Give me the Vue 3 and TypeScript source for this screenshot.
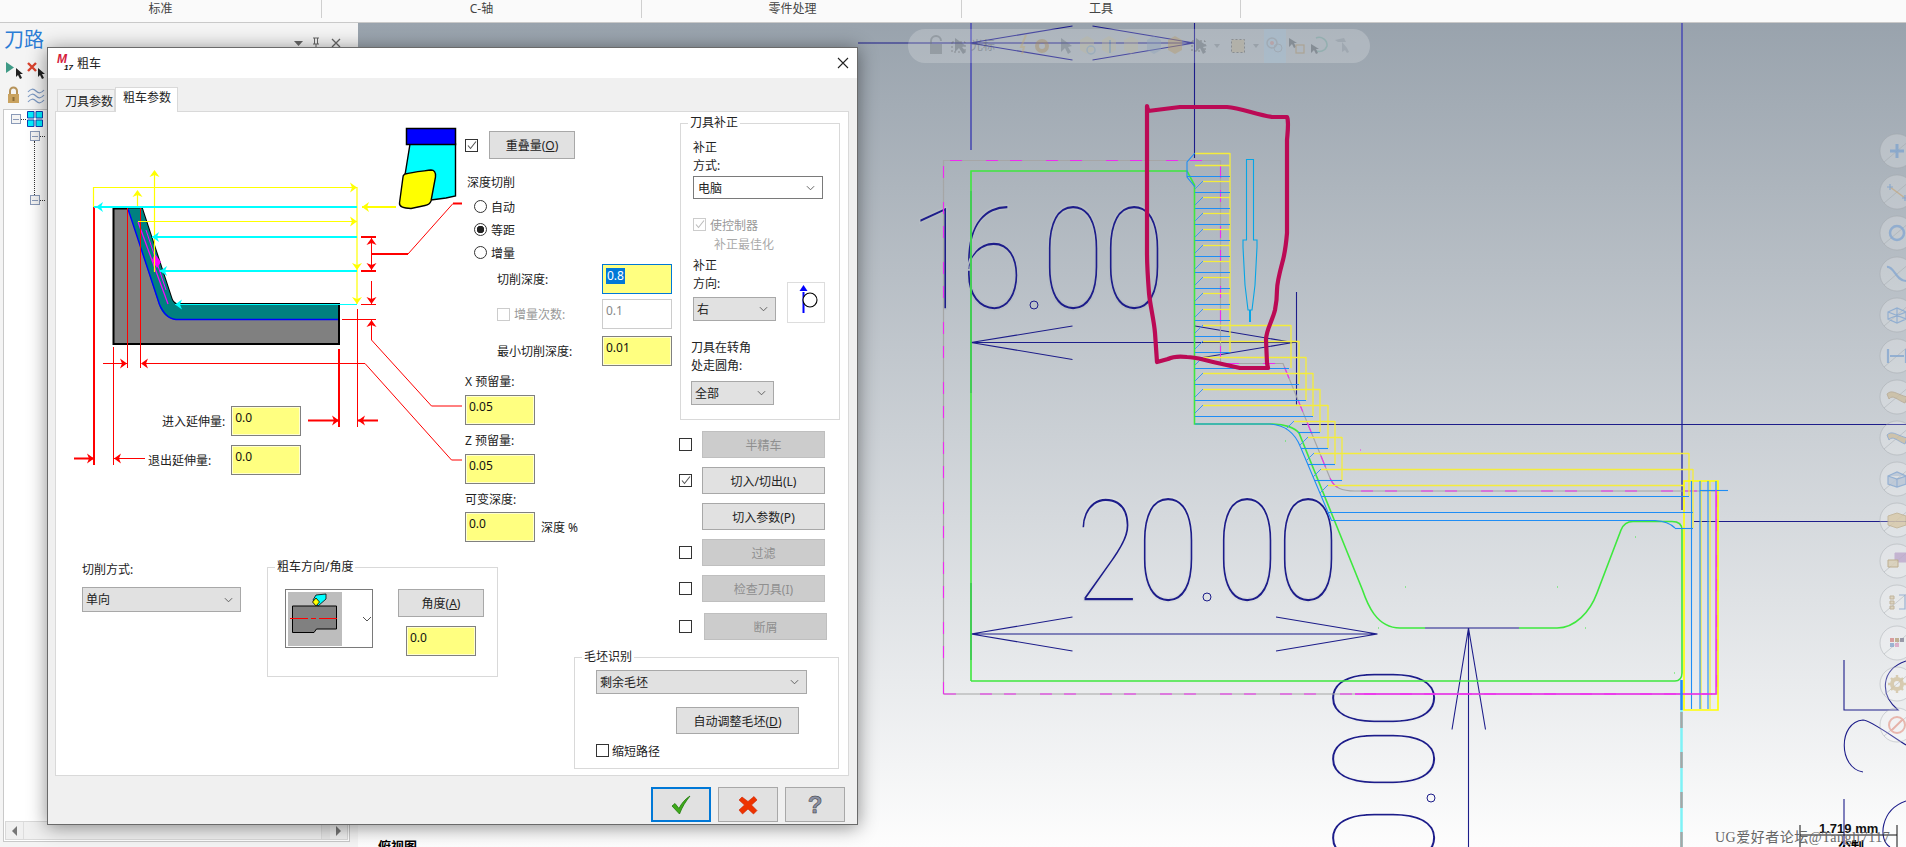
<script setup lang="ts">
const tabs = ['标准', 'C-轴', '零件处理', '工具']

// 右侧按钮
const sideButtons = [
  { label: '半精车', on: false, off: true, box: true },
  { label: '切入/切出(L)', on: true, off: false, box: true },
  { label: '切入参数(P)', on: false, off: false, box: false },
  { label: '过滤', on: false, off: true, box: true },
  { label: '检查刀具(I)', on: false, off: true, box: true },
  { label: '断屑', on: false, off: true, box: true, last: true }
]

// 粗加工路径数据
const bluePasses: number[][] = []
for (let y = 192; y <= 352; y += 16) bluePasses.push([1195, y, 1230])
bluePasses.push(
  [1187, 176, 1230], [1195, 368, 1289], [1195, 384, 1299], [1195, 400, 1306], [1195, 416, 1313],
  [1298, 432, 1320], [1301, 448, 1328], [1308, 464, 1335], [1314, 480, 1342], [1321, 496, 1689],
  [1328, 512, 1693], [1675, 528, 1693], [1700, 490, 1728]
)
const yellowPasses: number[][] = []
for (let y = 181; y <= 309; y += 16) yellowPasses.push([1203, y, 1230])
yellowPasses.push(
  [1195, 153, 1230], [1195, 165, 1230], [1203, 325, 1291], [1203, 341, 1299], [1203, 357, 1306],
  [1203, 373, 1313], [1203, 389, 1320], [1203, 405, 1328], [1294, 421, 1335], [1308, 437, 1342],
  [1314, 453, 1689], [1321, 469, 1693], [1328, 485, 1684]
)
const yellowDrops = [
  [1230, 153, 352], [1291, 325, 368], [1299, 341, 384], [1306, 357, 400], [1313, 373, 416],
  [1320, 389, 432], [1328, 405, 448], [1335, 421, 464], [1342, 437, 480], [1689, 453, 496],
  [1693, 469, 528], [1701, 481, 709], [1710, 481, 709]
]
const ticks = yellowPasses.filter(p => p[1] > 170)

// 背景色, 用来把大数字的笔画压细
const bgAt = (y: number) => {
  const t = (y - 23) / 824
  const mix = (a: number, b: number) => Math.round(a + (b - a) * t)
  return `rgb(${mix(153, 253)},${mix(163, 253)},${mix(173, 253)})`
}
const bigDigits = [
  { t: '1', x: 941, y: 258, r: 0 },
  { t: '6', x: 992, y: 258, r: 0 },
  { t: '0', x: 1073, y: 258, r: 0 },
  { t: '0', x: 1134, y: 258, r: 0 },
  { t: '2', x: 1107, y: 550, r: 0 },
  { t: '0', x: 1168, y: 550, r: 0 },
  { t: '0', x: 1247, y: 550, r: 0 },
  { t: '0', x: 1308, y: 550, r: 0 },
  { t: '0', x: 1384, y: 698, r: -90 },
  { t: '0', x: 1384, y: 759, r: -90 },
  { t: '0', x: 1384, y: 838, r: -90 }
].map(d => ({ ...d, edge: bgAt(d.y) }))

const railY = Array.from({ length: 15 }, (_, i) => 151 + i * 41)
const railIcons = [
  [{ d: 'M-7 0H7M0-7V7', s: '#7fa2cc', w: 3, f: 'none' }],
  [{ d: 'M-7-5L8 6', s: '#c4ab86', w: 1.5, f: 'none' }, { d: 'M-10-5H-4M-7-8V-2M5 6H11M8 3V9', s: '#7fa2cc', w: 1.2, f: 'none' }],
  [{ d: 'M-7 0a7 7 0 1 0 14 0a7 7 0 1 0-14 0', s: '#84a6d0', w: 2.5, f: 'none' }],
  [{ d: 'M-10-7C-3-8-1 7 9 7', s: '#84a6d0', w: 2.2, f: 'none' }],
  [{ d: 'M-9-3L0-7L9-3V4L0 8L-9 4ZM-9-3L9 4M9-3L-9 4M0-7V8', s: '#84a6d0', w: 1.2, f: 'none' }],
  [{ d: 'M-9-7V7M9-7V7M-7 0H7', s: '#84a6d0', w: 2.2, f: 'none' }],
  [{ d: 'M-10-3C-5-8-1-3 10 0L8 6C0 3-4-3-8 2Z', s: '#b7a88f', w: 1, f: '#cbbd9f' }],
  [{ d: 'M-10-3C-5-8-1-3 10 0L8 6C0 3-4-3-8 2Z', s: '#8aa6cb', w: 1, f: '#cbbd9f' }],
  [{ d: 'M-9-3L0-7L9-3V5L0 8L-9 5ZM-9-3L0 0L9-3M0 0V8', s: '#84a6d0', w: 1.2, f: '#b9c6d6' }],
  [{ d: 'M-9-4L0-7L9-4V5L0 8L-9 5Z', s: '#c0b08f', w: 1, f: '#d8c9a8' }],
  [{ d: 'M-2-8H11V1H-2Z', s: '#bda9cc', w: 1, f: '#bda9cc' }, { d: 'M-9-1H1V6H-9Z', s: '#b5a27d', w: 1, f: '#d9ceb5' }],
  [{ d: 'M-7-6H-3V-3H-7ZM-7-1H-3V2H-7ZM-7 4H-3V7H-7Z', s: '#b9a88a', w: 1, f: '#d9ceb5' }, { d: 'M2-7H8V7H2', s: '#8aa6cb', w: 1.2, f: 'none' }],
  [{ d: 'M-7-5H-3V-1H-7Z', s: '#d38a8a', w: 0, f: '#d38a8a' }, { d: 'M-2-5H2V-1H-2Z', s: '#9ab', w: 0, f: '#b5a27d' }, { d: 'M3-5H7V-1H3Z', s: '#9ab', w: 0, f: '#889' }, { d: 'M-7 0H-3V4H-7Z', s: '#9ab', w: 0, f: '#8aa6cb' }, { d: 'M-2 0H2V4H-2Z', s: '#9ab', w: 0, f: '#d9a0c0' }],
  [{ d: 'M-5 0a5 5 0 1 0 10 0a5 5 0 1 0-10 0', s: '#d2c3a2', w: 4, f: 'none' }, { d: 'M0-9V-6M0 6V9M-9 0H-6M6 0H9M-6-6L-4-4M6-6L4-4M-6 6L-4 4M6 6L4 4', s: '#d2c3a2', w: 2.4, f: 'none' }],
  [{ d: 'M-8 0a8 8 0 1 0 16 0a8 8 0 1 0-16 0M-6 6L6-6', s: '#e6a79c', w: 2, f: 'none' }]
]

// 箭头: l r u d
const head = (x: number, y: number, dir: string, len = 7, half = 5) => {
  if (dir === 'l') return `${x},${y} ${x + len},${y - half} ${x + len - 2},${y} ${x + len},${y + half}`
  if (dir === 'r') return `${x},${y} ${x - len},${y - half} ${x - len + 2},${y} ${x - len},${y + half}`
  if (dir === 'u') return `${x},${y} ${x - half},${y + len} ${x},${y + len - 2} ${x + half},${y + len}`
  return `${x},${y} ${x - half},${y - len} ${x},${y - len + 2} ${x + half},${y - len}`
}
const redHeads = [
  head(127, 363.5, 'r'), head(141, 363.5, 'l'), head(339, 420.5, 'r'), head(358, 420.5, 'l'),
  head(94, 458.5, 'r'), head(114, 458.5, 'l'), head(371.5, 238, 'u'), head(371.5, 270, 'd'),
  head(371.5, 304, 'd'), head(371.5, 320, 'u')
]
const yellowHeads = [
  head(357, 187.5, 'r'), head(357, 221.5, 'r'), head(357, 270, 'd'), head(357, 304, 'd'),
  head(154.5, 170, 'u'), head(137.5, 190, 'u'), head(362, 207, 'l')
]
const cyanHeads = [
  head(96, 207, 'l'), head(152, 237, 'l'), head(160, 271, 'l'), head(175, 304.5, 'l')
]
</script>

<template>
  <div class="app">
    <header class="topbar">
      <div v-for="t in tabs" :key="t" class="topcell">{{ t }}</div>
    </header>

    <main class="work">
      <aside class="side">
        <div class="side-head">
          <span class="side-title">刀路</span>
          <svg class="side-pins" width="56" height="14" viewBox="0 0 56 14">
            <path d="M0 5H9L4.500 10Z" fill="#666" />
            <path d="M19 2H25M20.500 2V8M23.500 2V8M19 8H25M22 8V13" fill="none" stroke="#666" />
            <path d="M38 3L46 11M46 3L38 11" fill="none" stroke="#666" stroke-width="1.300" />
          </svg>
        </div>
        <div class="side-tool">
          <svg width="46" height="18" viewBox="0 0 46 18">
            <path d="M1 1V12L9 6.500Z" fill="#3f9a86" />
            <path d="M11 7V16L13 14L15 18L17 17L15 13H18Z" fill="#222" />
            <path d="M23 2L31 10M31 2L23 10" stroke="#d9412c" stroke-width="2.400" />
            <path d="M33 7V16L35 14L37 18L39 17L37 13H40Z" fill="#222" />
          </svg>
        </div>
        <div class="side-tool second">
          <svg width="46" height="18" viewBox="0 0 46 18">
            <path d="M5 8V5a3.500 3.500 0 0 1 7 0V8" fill="none" stroke="#b6935a" stroke-width="2" />
            <rect x="3" y="8" width="11" height="9" fill="#c9a25f" />
            <rect x="7.500" y="11" width="2" height="4" fill="#8c6d38" />
            <path d="M23 6Q27 1 31 5T39 4M23 11Q27 6 31 10T39 9M23 16Q27 11 31 15T39 14" fill="none" stroke="#7d9ac4" stroke-width="1.200" />
          </svg>
        </div>
        <div class="tree">
          <div class="tree-nodes">
            <div class="tree-root">
              <span class="minus"></span>
              <i class="dots"></i>
              <svg width="16" height="16" viewBox="0 0 16 16" class="tree-ico">
                <path d="M.5 .5H7V7H.5ZM9 .5H15.500V7H9ZM.5 9H7V15.500H.5ZM9 9H15.500V15.500H9Z" fill="#00f0ff" stroke="#1040b0" />
              </svg>
            </div>
            <div class="tree-kid"><span class="minus"></span><i class="dots"></i></div>
            <div class="tree-link"></div>
            <div class="tree-kid"><span class="minus"></span><i class="dots"></i></div>
          </div>
          <div class="hscroll">
            <span class="sb-end"><i class="sb-left"></i></span>
            <span class="sb-track"><span class="sb-thumb"></span></span>
            <span class="sb-end"><i class="sb-right"></i></span>
          </div>
        </div>
      </aside>

      <section class="viewport">
        <svg class="cad" width="1548" height="824" viewBox="358 23 1548 824" fill="none">
          <!-- 标注数字 -->
          <g fill="#1d1d8a" class="cad-num">
            <text
              v-for="(d, i) in bigDigits"
              :key="i"
              :transform="`translate(${d.x} ${d.y}) rotate(${d.r}) scale(0.82 1)`"
              :stroke="d.edge"
              stroke-width="1.700"
              text-anchor="middle"
              dy="0.355em"
            >{{ d.t }}</text>
          </g>
          <g stroke="#1d1d8a" stroke-width="1">
            <circle cx="1034" cy="305" r="4" />
            <circle cx="1207" cy="597" r="4" />
            <circle cx="1431" cy="798" r="4" />
          </g>

          <!-- 尺寸线 -->
          <g stroke="#5c60b2" stroke-width="2" shape-rendering="crispEdges">
            <path d="M970.500 23V150M970.500 191V393M970.500 583V660M1682 23V510" />
          </g>
          <g stroke="#1d1d8a" stroke-width="1.100">
            <path d="M858 43H1194M970 43L1072.500 26M970 43L1072.500 60M1194 43L1092.500 26M1194 43L1092.500 60M1194.500 23V158" />
            <path d="M971 342.500H1296M971 342.500L1072.500 326M971 342.500L1072.500 359.500M1293 342.500L1195 326M1293 342.500L1200 358M1296.500 292V404.500" />
            <path d="M971 634H1377.500M971 634L1072.500 617M971 634L1072.500 651M1377.500 634L1276 617M1377.500 634L1276 651" />
            <path d="M1468.500 628V847M1468.500 628L1452 729.500M1468.500 628L1485.500 729.500M1425 628H1519" />
            <path d="M1302 424.500H1906M1694 521.500H1906" />
            <path d="M1844 660V710H1898C1880 695 1880 670 1906 661" />
            <path d="M1863 772C1838 768 1838 722 1863 720C1870 720 1890 735 1906 745M1844 799V847M1906 801C1880 810 1878 840 1890 847" />
          </g>

          <!-- 毛坯轮廓 -->
          <path d="M943.500 694V160.500H1220.500V363.500H1283L1330 478C1334 488 1342 491 1355 491H1717V694Z" stroke="#a6a6a6" stroke-width="1.200" />
          <path d="M943.500 694V160.500H1220.500V363.500H1283L1330 478C1334 488 1342 491 1355 491H1717V694Z" stroke="#f02af0" stroke-width="1.100" stroke-dasharray="12 24 12 12" />

          <!-- 零件轮廓 -->
          <path d="M971 681V171H1187L1194.500 185V424H1273C1285 424 1295 428 1299 433L1333 517L1362.500 590C1367 603 1376 628 1400 628H1425M1519 628H1557C1575 628 1590 612 1597 593L1621 530C1623 525 1627 521.500 1633 521.500H1672C1678 521.500 1682 524 1682 530V673C1682 678 1679 681 1675 681H971" stroke="#3ee83e" stroke-width="1.600" />
          <path d="M1285 441h1M1405 587h1M1557 587h1M1635 537h1M1378 628h1M1585 628h1M1674 673h1" stroke="#3ee83e" />
          <path d="M1360 450h1" stroke="#f02af0" />

          <!-- 路径 -->
          <g stroke="#f4ec3c" stroke-width="1.300">
            <path v-for="(p, i) in yellowPasses" :key="'y' + i" :d="`M${p[0]} ${p[1] + 0.5}H${p[2]}`" />
            <path v-for="(p, i) in yellowDrops" :key="'d' + i" :d="`M${p[0]} ${p[1]}V${p[2]}`" />
            <path d="M1684 481H1718V710H1684Z" stroke="#ffff00" stroke-width="1.600" />
          </g>
          <g stroke="#1e8df5" stroke-width="1.100">
            <path v-for="(p, i) in bluePasses" :key="'b' + i" :d="`M${p[0]} ${p[1] + 0.5}H${p[2]}`" />
            <path d="M1691.500 481V709M1700 481V709M1708 481V709M1716 481V490" />
            <path d="M1195 153L1187 162V177L1195 187M1195 424H1270C1285 425 1295 433 1300.500 447L1331.500 520.500H1655C1665 521 1670 523 1675 528" />
          </g>
          <g stroke="#3f96ee">
            <path v-for="(p, i) in ticks" :key="'t' + i" :d="`M${p[0] - 8} ${p[1] + 8}L${p[0]} ${p[1]}`" />
          </g>
          <path d="M1716 490V694H1355" stroke="#f02af0" stroke-width="1.400" />
          <path d="M1246.500 159.500H1253.500V240H1257V247L1255 285L1252 310H1248L1245 285L1243 247V240H1246.500Z" stroke="#06a5e6" stroke-width="1.100" />
          <path d="M1250 310V322" stroke="#06a5e6" stroke-width="2" />
          <path d="M1681.500 680V710" stroke="#1e8df5" stroke-width="2.500" />
          <path d="M1681.500 710V847" stroke="#7ef2f6" stroke-width="2.500" />
          <path d="M1681.500 712V847" stroke="#a6a6a6" stroke-width="2.500" stroke-dasharray="16 24" />

          <!-- 手绘红框 -->
          <path
            d="M1147 106L1148 111L1180 107L1227 107C1240 108 1255 114 1272 117L1287 117C1289 121 1288 128 1287 140L1287 233C1286 245 1285 252 1283 260C1279 275 1277 282 1277 290C1277 300 1276 305 1275 310C1272 322 1266 330 1266 340L1267 363L1268 368L1240 368L1213 362C1200 359 1195 357 1187 357C1178 356 1172 357 1168 359L1157 362L1155 333C1154 320 1150 305 1149 293C1148 280 1147 265 1147 253Z"
            stroke="#bb0a55"
            stroke-width="4.200"
            stroke-linejoin="round"
          />

          <!-- 悬浮工具条 -->
          <rect x="908" y="29" width="462" height="34" rx="17" fill="#fff" fill-opacity="0.2" />
          <g class="float-icons">
            <rect x="1264" y="29" width="22" height="34" fill="#9ec3de" fill-opacity="0.7" />
            <path d="M931 44V41a5 5 0 0 1 10 0" stroke="#70787e" stroke-width="2" />
            <rect x="930" y="44" width="12" height="10" fill="#70787e" />
            <rect x="952" y="42" width="13" height="10" stroke="#555" stroke-dasharray="2 2" />
            <path d="M955 38L955 52L959 48L963 54L966 52L962 47L966 46Z" fill="#5f6770" />
            <text x="971" y="50" class="float-text">光标</text>
            <path d="M1026 35L1021 47H1024L1022 54" stroke="#c4ab6e" stroke-width="2" />
            <circle cx="1042" cy="46" r="5" stroke="#a98a5a" stroke-width="4" />
            <path d="M1061 38V52L1065 48L1068 54L1071 52L1068 47L1072 46Z" fill="#6b7680" />
            <path d="M1080 40L1087 36L1094 40V50L1087 54L1080 50Z" fill="#bdb7a0" />
            <circle cx="1091" cy="50" r="4" stroke="#7fa0b8" stroke-width="1.500" />
            <path d="M1102 40L1109 36L1116 40V50L1109 54L1102 50Z" fill="#bdb7a0" />
            <path d="M1110 40V53" stroke="#6f94b0" stroke-width="2" />
            <path d="M1124 40L1131 36L1138 40V50L1131 54L1124 50Z" fill="#bdb7a0" />
            <path d="M1147 40L1154 36L1161 40V50L1154 54L1147 50Z" fill="#8fa4bc" />
            <path d="M1168 40L1175 36L1182 40V50L1175 54L1168 50Z" fill="#b89a66" />
            <rect x="1192" y="41" width="13" height="10" stroke="#444" stroke-dasharray="2 2" />
            <path d="M1196 38V52L1200 48L1203 54L1206 52L1203 47L1207 46Z" fill="#5f6770" />
            <path d="M1214 44H1220L1217 48Z" fill="#7d858d" />
            <rect x="1231.500" y="39.500" width="13" height="13" fill="#b8aa8c" stroke="#555" stroke-dasharray="2 2" />
            <path d="M1253 44H1259L1256 48Z" fill="#7d858d" />
            <circle cx="1272" cy="43" r="5" stroke="#8d9aa6" stroke-width="1.500" />
            <circle cx="1272" cy="43" r="2" fill="#c08b8b" />
            <circle cx="1278" cy="48" r="4" stroke="#8d9aa6" />
            <path d="M1289 38V47L1292 44L1294 48L1296 47L1294 43L1297 43Z" fill="#4c545c" />
            <rect x="1296" y="45" width="8" height="8" stroke="#a98a5a" stroke-width="1.200" />
            <path d="M1316 38A8 8 0 0 1 1327 46A8 8 0 0 1 1315 50" stroke="#6ea59c" stroke-width="1.500" />
            <path d="M1311 44V53L1314 50L1316 54L1318 53L1316 49L1319 49Z" fill="#4c545c" />
            <path d="M1338 42L1335 40L1344 38L1346 42ZM1342 42V52L1345 50L1347 53L1349 52L1347 48Z" fill="#8b959e" />
          </g>

          <!-- 右侧按钮 -->
          <g v-for="(y, i) in railY" :key="'r' + i" :transform="`translate(1897 ${y})`">
            <circle r="17" fill="#fff" fill-opacity="0.22" stroke="#9aa0a6" stroke-opacity="0.4" />
            <path d="M-13 11L13-11" stroke="#9aa0a6" stroke-opacity="0.4" />
            <g class="rail-icon">
              <path
                v-for="(p, k) in railIcons[i]"
                :key="k"
                :d="p.d"
                :stroke="p.s"
                :stroke-width="p.w"
                :fill="p.f"
              />
            </g>
          </g>

          <!-- 状态信息 -->
          <text x="378" y="851" class="view-name">俯视图</text>
          <path d="M1800 825V847M1897 825V847M1800 835H1897" stroke="#111" />
          <text x="1819" y="833" class="scale-num">1.719 mm</text>
          <text x="1838" y="851" class="view-name">公制</text>
          <text x="1715" y="842" class="mark">UG爱好者论坛@Tangli7117</text>
        </svg>
      </section>
    </main>

    <div class="dialog">
      <div class="dlg-title">
        <span class="dlg-logo"><b>M</b><i>17</i></span>
        <span>粗车</span>
        <svg class="dlg-close" width="12" height="12" viewBox="0 0 12 12">
          <path d="M1 1L11 11M11 1L1 11" stroke="#222" stroke-width="1.100" />
        </svg>
      </div>

      <div class="dlg-tabs">
        <div class="dtab">刀具参数</div>
        <div class="dtab active">粗车参数</div>
      </div>

      <div class="panel">
        <!-- 参数示意图 -->
        <div class="figure">
          <svg width="408" height="428" viewBox="56 112 408 428" fill="none">
            <path d="M113.500 208.500H142L171 297C172 301 174 303 176 304H339V344H113.500Z" fill="#808080" stroke="#000" stroke-width="2" />
            <path d="M128 208.500H142L171 297C172 301 174 303 176 304.500H338V319.500H175C168 319 162 314 159 305Z" fill="#008080" />
            <path d="M128 209L158 300C161 311 168 319 176 319.500H338" stroke="#0000ff" stroke-width="1.400" />
            <path d="M138 222L168 304" stroke="#ff00ff" stroke-width="1.200" />
            <path d="M146 230L166 290" stroke="#ff00ff" />
            <path d="M155 254L161 262L157 268L152 260Z" fill="#ff00ff" />
            <!-- 尺寸 -->
            <g stroke="#ff0000">
              <path d="M94 207V465M339 349V427M308 420.500H339M358 420.500H378M361 237H376M361 271H376M371.500 254H408M453 203.500H462M74 458.500H94" stroke-width="2" />
              <path d="M127.500 208V368M140.500 208V368M113.500 347V465M357.500 309V427M103 363.500H127M145 363.500H365L451.500 460H462M361 304.500H376M342 319.500H376M371.500 237V271M371.500 281V304M371.500 320V340L431.500 406H462M408 254L453 203.500M114 458.500H145" />
            </g>
            <polygon v-for="(p, i) in redHeads" :key="'rh' + i" :points="p" fill="#ff0000" />
            <g stroke="#ffff00">
              <path d="M93.500 207V187.500H357V304M138 221.500H357M154.500 172V272M137.500 192V207" stroke-width="1.200" />
              <path d="M362 207H396" stroke-width="2" />
            </g>
            <polygon v-for="(p, i) in yellowHeads" :key="'yh' + i" :points="p" fill="#ffff00" />
            <g stroke="#00ffff">
              <path d="M94 207H357M152 237H357M160 271H357" stroke-width="2" />
              <path d="M175 304.500H357" />
            </g>
            <polygon v-for="(p, i) in cyanHeads" :key="'ch' + i" :points="p" fill="#00ffff" />
            <!-- 刀具 -->
            <path d="M410 144L405 175L431 200L446 198L455.500 196V144Z" fill="#00ffff" stroke="#000" stroke-width="1.400" />
            <rect x="406.500" y="128.500" width="49" height="16" fill="#0000ff" stroke="#000" stroke-width="1.500" />
            <path d="M405 174C412 172 424 171 431 170C434 170 436 172 435.500 177L431 201C430 204 428 205 425 205.500L411 208.500C404 208 399 207 399.500 203L403 177C403 175 404 175 405 174Z" fill="#ffff00" stroke="#000" stroke-width="1.400" />
          </svg>
          <div class="fig-row enter">
            <span>进入延伸量:</span>
            <div class="edit">0.0</div>
          </div>
          <div class="fig-row leave">
            <span>退出延伸量:</span>
            <div class="edit">0.0</div>
          </div>
        </div>

        <!-- 深度切削 -->
        <div class="mid">
          <div class="overlap">
            <span class="chk on"><svg width="11" height="11" viewBox="0 0 11 11"><path d="M2 5.500L4.500 8.500L10 1.500" /></svg></span>
            <button class="btn overlap-btn">重叠量(<u>O</u>)</button>
          </div>
          <div class="mid-title">深度切削</div>
          <div class="radios">
            <label class="radio"><i></i>自动</label>
            <label class="radio on"><i></i>等距</label>
            <label class="radio"><i></i>增量</label>
          </div>
          <div class="depth-row">
            <span>切削深度:</span>
            <div class="edit focus"><span class="sel">0.8</span></div>
          </div>
          <div class="depth-row second off">
            <span class="boxed"><span class="chk dim"></span>增量次数:</span>
            <div class="edit dis">0.1</div>
          </div>
          <div class="depth-row third">
            <span>最小切削深度:</span>
            <div class="edit">0.01</div>
          </div>
          <div class="stock-label">X 预留量:</div>
          <div class="edit stock-edit">0.05</div>
          <div class="stock-label">Z 预留量:</div>
          <div class="edit stock-edit">0.05</div>
          <div class="stock-label">可变深度:</div>
          <div class="var-row">
            <div class="edit">0.0</div>
            <span>深度 %</span>
          </div>
        </div>

        <!-- 刀具补正 + 按钮 -->
        <div class="right">
          <div class="group comp">
            <span class="legend">刀具补正</span>
            <div class="two">补正<br />方式:</div>
            <div class="combo white comp-type">电脑<svg viewBox="0 0 10 6"><path d="M1 1L5 5L9 1" /></svg></div>
            <div class="ctrl-row">
              <span class="chk dim on"><svg width="11" height="11" viewBox="0 0 11 11"><path d="M2 5.500L4.500 8.500L10 1.500" /></svg></span>
              <span>使控制器</span>
            </div>
            <div class="ctrl-sub">补正最佳化</div>
            <div class="dir-row">
              <div>
                <div class="two">补正<br />方向:</div>
                <div class="combo dir-combo">右<svg viewBox="0 0 10 6"><path d="M1 1L5 5L9 1" /></svg></div>
              </div>
              <div class="dir-ico">
                <svg width="36" height="39" viewBox="0 0 36 39">
                  <path d="M15.500 30V9" stroke="#0000ff" stroke-width="2" />
                  <path d="M15.500 2L11.500 8H19.500Z" fill="#0000ff" />
                  <circle cx="22" cy="17" r="7" fill="#fff" stroke="#000" stroke-width="1.100" />
                </svg>
              </div>
            </div>
            <div class="two corner">刀具在转角<br />处走圆角:</div>
            <div class="combo corner-combo">全部<svg viewBox="0 0 10 6"><path d="M1 1L5 5L9 1" /></svg></div>
          </div>
          <div class="btn-list">
            <div v-for="b in sideButtons" :key="b.label" class="btn-row" :class="{ last: b.last }">
              <span v-if="b.box" class="chk" :class="{ on: b.on }">
                <svg v-if="b.on" width="11" height="11" viewBox="0 0 11 11"><path d="M2 5.500L4.500 8.500L10 1.500" /></svg>
              </span>
              <span v-else class="chk-gap"></span>
              <button class="btn side-btn" :class="{ disabled: b.off }">{{ b.label }}</button>
            </div>
          </div>
        </div>

        <!-- 切削方式 + 方向 -->
        <div class="lower">
          <div class="cut-mode">
            <div>切削方式:</div>
            <div class="combo mode-combo">单向<svg viewBox="0 0 10 6"><path d="M1 1L5 5L9 1" /></svg></div>
          </div>
          <div class="group angle">
            <span class="legend">粗车方向/角度</span>
            <div class="pic-combo">
              <svg width="54" height="54" viewBox="0 0 54 54">
                <rect width="54" height="54" fill="#bdbdbd" />
                <path d="M4.500 14H48.500V37H28.500L26 40.500H4.500Z" fill="#808080" stroke="#000" />
                <path d="M25 8L28 3L38 2V7L30 14Z" fill="#00ffff" stroke="#000" stroke-width="0.800" />
                <path d="M28 6L31.500 10L28 14L24.500 10Z" fill="#ffff00" stroke="#000" stroke-width="0.800" />
                <path d="M2 26.500H51" stroke="#ff0000" stroke-dasharray="18 3 5 3" />
              </svg>
              <svg class="pic-arrow" width="10" height="6" viewBox="0 0 10 6"><path d="M1 1L5 5L9 1" /></svg>
            </div>
            <div class="angle-col">
              <button class="btn angle-btn">角度(<u>A</u>)</button>
              <div class="edit">0.0</div>
            </div>
          </div>
        </div>

        <!-- 毛坯识别 -->
        <div class="group blank">
          <span class="legend">毛坯识别</span>
          <div class="combo blank-combo">剩余毛坯<svg viewBox="0 0 10 6"><path d="M1 1L5 5L9 1" /></svg></div>
          <button class="btn blank-btn">自动调整毛坯(<u>D</u>)</button>
          <div class="shorten"><span class="chk"></span>缩短路径</div>
        </div>
      </div>

      <div class="dlg-foot">
        <button class="foot-btn primary">
          <svg width="20" height="20" viewBox="0 0 20 20">
            <path d="M1 11L4 8.500L8 13.500C10 9 14 4 19 1C15 6 11 12 8.500 19Z" fill="#3faa1a" stroke="#1f7a0c" stroke-width="0.800" />
          </svg>
        </button>
        <button class="foot-btn">
          <svg width="20" height="20" viewBox="0 0 20 20">
            <path d="M4 2L10 6.500L16 1.500L19 5L13.500 10L19 15.500L15.500 19L10 14L4.500 19L1 15L6.500 10L1 5Z" fill="#ee3300" stroke="#cc2200" stroke-width="0.600" />
          </svg>
        </button>
        <button class="foot-btn help">?</button>
      </div>
    </div>
  </div>
</template>

<style>
html,
body {
  margin: 0;
  overflow: hidden;
}
</style>

<style scoped>
.app {
  position: relative;
  width: 1906px;
  height: 847px;
  overflow: hidden;
  font-family: "Noto Sans", "Noto Sans CJK SC", sans-serif;
  font-size: 12px;
  color: #222;
  background: #f5f5f5;
}

.topbar {
  display: flex;
  height: 22px;
  background: #fafafa;
  border-bottom: 1px solid #c9c9c9;
  box-sizing: content-box;
}
.topcell {
  width: 320px;
  height: 18px;
  line-height: 18px;
  text-align: center;
  color: #444;
  border-right: 1px solid #cfcfcf;
  box-sizing: border-box;
}
.topcell:first-child {
  width: 322px;
}
.topcell:nth-child(3) {
  padding-right: 18px;
}
.topcell:last-child {
  width: 279px;
}

.work {
  display: flex;
  height: 824px;
}

.side {
  display: flex;
  flex-direction: column;
  width: 358px;
  flex: none;
  box-sizing: border-box;
  padding: 0 8px 5px 3px;
  background: #f4f4f4;
}
.side-head {
  display: flex;
  align-items: center;
  justify-content: space-between;
  height: 34px;
}
.side-title {
  margin-left: 1px;
  font-size: 20px;
  line-height: 28px;
  color: #2b7dd6;
}
.side-pins {
  margin-top: 6px;
}
.side-tool {
  height: 20px;
  margin: 4px 0 0 2px;
}
.side-tool.second {
  margin-top: 5px;
}
.tree {
  display: flex;
  flex-direction: column;
  justify-content: space-between;
  flex: 1;
  margin-top: 3px;
  background: #fff;
  border: 1px solid #c9c9c9;
}
.tree-root {
  display: flex;
  align-items: center;
  height: 16px;
  margin: 1px 0 0 7px;
}
.tree-ico {
  margin-left: 1px;
}
.minus {
  display: block;
  flex: none;
  width: 8px;
  height: 8px;
  border: 1px solid #8a9ab8;
  background: linear-gradient(#8a9ab8, #8a9ab8) center / 6px 1px no-repeat #f4f4f4;
}
.dots {
  display: block;
  width: 5px;
  border-top: 1px dotted #333;
}
.tree-kid {
  display: flex;
  align-items: center;
  margin-left: 26px;
}
.tree-kid:nth-child(2) {
  margin-top: 4px;
}
.tree-link {
  height: 54px;
  margin-left: 30px;
  border-left: 1px dotted #333;
}
.hscroll {
  display: flex;
  height: 17px;
  margin: 0 1px 1px;
  background: #f0f0f0;
  border: 1px solid #d9d9d9;
}
.sb-end {
  display: flex;
  align-items: center;
  justify-content: center;
  width: 17px;
  flex: none;
}
.sb-track {
  flex: 1;
  display: flex;
  background: #e8e8e8;
}
.sb-thumb {
  flex: 1;
  margin-right: 8px;
  background: #f0f0f0;
  border-left: 1px solid #ddd;
  border-right: 1px solid #ddd;
}
.sb-left,
.sb-right {
  width: 0;
  height: 0;
  border: 5px solid transparent;
}
.sb-left {
  border-right-color: #777;
  margin-right: 5px;
}
.sb-right {
  border-left-color: #777;
  margin-left: 5px;
}

.viewport {
  flex: 1;
  background: linear-gradient(#99a3ad, #fdfdfd);
}
.cad {
  display: block;
}
.cad-num {
  font-family: Roboto, "Noto Sans", sans-serif;
  font-size: 143px;
  font-weight: 100;
}
.float-icons {
  opacity: 0.42;
}
.rail-icon {
  opacity: 0.8;
}
.float-text {
  font-size: 12px;
  fill: #5a626a;
}
.view-name {
  font-size: 13px;
  font-weight: 700;
  fill: #000;
}
.scale-num {
  font-family: "Liberation Sans", sans-serif;
  font-size: 13px;
  font-weight: 700;
  fill: #111;
}
.mark {
  font-family: "Liberation Serif", "Noto Sans CJK SC", serif;
  font-size: 14px;
  letter-spacing: 0.500px;
  fill: #666;
}

/* 对话框 */
.dialog {
  position: absolute;
  left: 47px;
  top: 47px;
  display: flex;
  flex-direction: column;
  width: 811px;
  height: 778px;
  box-sizing: border-box;
  border: 1px solid #6a6a6a;
  background: #f0f0f0;
  box-shadow: 0 2px 18px rgba(0, 0, 0, 0.45);
}
.dlg-title {
  position: relative;
  display: flex;
  align-items: center;
  height: 30px;
  padding-left: 8px;
  background: #fff;
}
.dlg-logo {
  position: relative;
  display: block;
  width: 17px;
  height: 17px;
  margin-right: 4px;
  line-height: 1;
}
.dlg-logo b {
  position: absolute;
  left: 1px;
  top: -1px;
  font: italic 700 12px/10px "Liberation Sans", sans-serif;
  color: #d5203a;
}
.dlg-logo i {
  position: absolute;
  right: 0;
  top: 9px;
  font: italic 700 8px/8px "Liberation Sans", sans-serif;
  color: #111;
}
.dlg-close {
  position: absolute;
  right: 8px;
  top: 9px;
}
.dlg-tabs {
  display: flex;
  align-items: flex-end;
  height: 34px;
  padding-left: 9px;
  margin-bottom: -1px;
}
.dtab {
  height: 23px;
  line-height: 23px;
  padding: 0 7px;
  box-sizing: border-box;
  width: 58px;
  border: 1px solid #d9d9d9;
  border-bottom: none;
  white-space: nowrap;
}
.dtab.active {
  position: relative;
  z-index: 1;
  width: 63px;
  height: 25px;
  line-height: 20px;
  background: #fff;
}

.panel {
  display: grid;
  grid-template-columns: 408px 110px 106px 168px;
  grid-template-rows: 428px 112px 123px;
  width: 794px;
  height: 665px;
  margin-left: 7px;
  box-sizing: border-box;
  background: #fff;
  border: 1px solid #d9d9d9;
}

.figure {
  position: relative;
  grid-column: 1;
  grid-row: 1;
}
.figure > svg {
  display: block;
}
.fig-row {
  position: absolute;
  display: flex;
  align-items: center;
  gap: 6px;
}
.fig-row.enter {
  left: 106px;
  top: 294px;
}
.fig-row.leave {
  left: 92px;
  top: 333px;
  gap: 20px;
}

.edit {
  width: 70px;
  height: 30px;
  box-sizing: border-box;
  padding: 1px 3px;
  line-height: 20px;
  color: #111;
  background: #ffff80;
  border: 1px solid #808080;
  box-shadow: inset 0 0 0 1px #ffffd0;
}
.edit.focus {
  border-color: #0078d7;
  box-shadow: inset 0 0 0 1px #ffff80;
}
.edit.dis {
  background: #fff;
  border-color: #ccc;
  box-shadow: none;
  color: #888;
}
.sel {
  display: inline-block;
  background: #0078d7;
  color: #fff;
  line-height: 16px;
  padding: 0 1px;
}

.chk {
  display: inline-flex;
  align-items: center;
  justify-content: center;
  width: 13px;
  height: 13px;
  flex: none;
  box-sizing: border-box;
  border: 1px solid #333;
  background: #fff;
}
.chk svg path {
  fill: none;
  stroke: #555;
  stroke-width: 1.100;
}
.chk.dim {
  border-color: #ccc;
}
.chk.dim svg path {
  stroke: #bbb;
}

.btn {
  display: block;
  padding: 0;
  box-sizing: border-box;
  font: inherit;
  color: #222;
  background: #e1e1e1;
  border: 1px solid #a8a8a8;
}
.btn.disabled {
  background: #ccc;
  color: #8f8f8f;
  border-color: #bfbfbf;
}

.mid {
  grid-column: 2 / 4;
  grid-row: 1;
  padding: 19px 0 0 1px;
}
.overlap {
  display: flex;
  align-items: center;
  gap: 11px;
}
.overlap-btn {
  width: 86px;
  height: 28px;
}
.mid-title {
  margin: 16px 0 0 2px;
  line-height: 16px;
}
.radios {
  display: flex;
  flex-direction: column;
  margin: 4px 0 0 9px;
}
.radio {
  display: flex;
  align-items: center;
  gap: 4px;
  height: 23px;
}
.radio i {
  display: block;
  width: 13px;
  height: 13px;
  box-sizing: border-box;
  border: 1px solid #333;
  border-radius: 50%;
}
.radio.on i {
  background: radial-gradient(circle, #222 0 3.500px, transparent 4px);
}
.depth-row {
  display: flex;
  align-items: center;
  justify-content: space-between;
  width: 175px;
  margin-left: 32px;
}
.depth-row.second {
  margin-top: 5px;
}
.depth-row.third {
  margin-top: 7px;
}
.depth-row.off {
  color: #999;
}
.boxed {
  display: flex;
  align-items: center;
  gap: 4px;
}
.stock-label {
  margin-top: 8px;
  line-height: 16px;
}
.stock-edit {
  margin-top: 5px;
}
.var-row {
  display: flex;
  align-items: center;
  gap: 6px;
  margin-top: 4px;
}

.right {
  grid-column: 4;
  grid-row: 1 / 3;
}
.group {
  position: relative;
  box-sizing: border-box;
  border: 1px solid #d9d9d9;
}
.legend {
  position: absolute;
  left: 7px;
  top: -9px;
  padding: 0 2px;
  line-height: 16px;
  background: #fff;
}
.comp {
  width: 160px;
  height: 297px;
  margin-top: 11px;
  padding: 15px 0 0 12px;
}
.two {
  line-height: 17.500px;
}
.combo {
  display: flex;
  align-items: center;
  justify-content: space-between;
  box-sizing: border-box;
  padding: 0 7px 0 3px;
  background: #e1e1e1;
  border: 1px solid #a8a8a8;
}
.combo svg {
  width: 9px;
  height: 6px;
  fill: none;
  stroke: #555;
}
.combo.white {
  background: #fff;
  border-color: #7a7a7a;
  padding-left: 4px;
}
.comp-type {
  width: 130px;
  height: 23px;
  margin-top: 2px;
}
.ctrl-row {
  display: flex;
  align-items: center;
  gap: 4px;
  height: 13px;
  margin-top: 19px;
  color: #999;
}
.ctrl-sub {
  margin: 6px 0 0 21px;
  line-height: 16px;
  color: #aaa;
}
.dir-row {
  display: flex;
  align-items: flex-end;
  gap: 11px;
  margin-top: 4px;
}
.dir-combo {
  width: 83px;
  height: 24px;
  margin-top: 5px;
}
.dir-ico {
  width: 38px;
  height: 41px;
  box-sizing: border-box;
  border: 1px solid #ddd;
  margin-bottom: -2px;
}
.dir-ico svg {
  display: block;
}
.corner {
  margin: 18px 0 0 -2px;
}
.corner-combo {
  width: 83px;
  height: 24px;
  margin: 7px 0 0 -2px;
}
.btn-list {
  display: flex;
  flex-direction: column;
  gap: 9px;
  margin: 11px 0 0 -1px;
}
.btn-row {
  display: flex;
  align-items: center;
  gap: 10px;
}
.btn-row.last {
  margin-top: 2px;
}
.btn-row.last .side-btn {
  margin-left: 2px;
}
.chk-gap {
  width: 13px;
  flex: none;
}
.side-btn {
  width: 123px;
  height: 27px;
}

.lower {
  display: flex;
  align-items: flex-start;
  grid-column: 1 / 3;
  grid-row: 2 / 4;
  padding-left: 26px;
}
.cut-mode {
  padding-top: 22px;
  line-height: 16px;
}
.mode-combo {
  width: 159px;
  height: 25px;
  margin-top: 9px;
}
.angle {
  display: flex;
  align-items: flex-start;
  width: 231px;
  height: 110px;
  margin: 27px 0 0 26px;
  padding: 21px 0 0 17px;
}
.pic-combo {
  display: flex;
  align-items: center;
  width: 88px;
  height: 59px;
  padding-left: 2px;
  box-sizing: border-box;
  border: 1px solid #7a7a7a;
}
.pic-combo svg {
  display: block;
}
.pic-arrow {
  margin-left: 20px;
  fill: none;
  stroke: #555;
}
.angle-col {
  display: flex;
  flex-direction: column;
  align-items: center;
  gap: 9px;
  width: 86px;
  margin-left: 25px;
}
.angle-btn {
  width: 86px;
  height: 28px;
}

.blank {
  grid-column: 3 / 5;
  grid-row: 3;
  width: 265px;
  height: 112px;
  margin-top: 5px;
  padding: 12px 0 0 21px;
}
.blank-combo {
  width: 211px;
  height: 24px;
}
.blank-btn {
  width: 123px;
  height: 27px;
  margin: 13px 0 0 80px;
}
.shorten {
  display: flex;
  align-items: center;
  gap: 3px;
  height: 13px;
  margin-top: 10px;
}

.dlg-foot {
  display: flex;
  justify-content: flex-end;
  gap: 7px;
  padding: 11px 12px 0 0;
}
.foot-btn {
  display: flex;
  align-items: center;
  justify-content: center;
  width: 60px;
  height: 35px;
  padding: 0;
  box-sizing: border-box;
  background: #e1e1e1;
  border: 1px solid #a8a8a8;
}
.foot-btn.primary {
  border: 2px solid #0078d7;
}
.foot-btn.help {
  font: 700 24px "Liberation Sans", sans-serif;
  color: #8a90a4;
  -webkit-text-stroke: 0.500px #333;
}
</style>
